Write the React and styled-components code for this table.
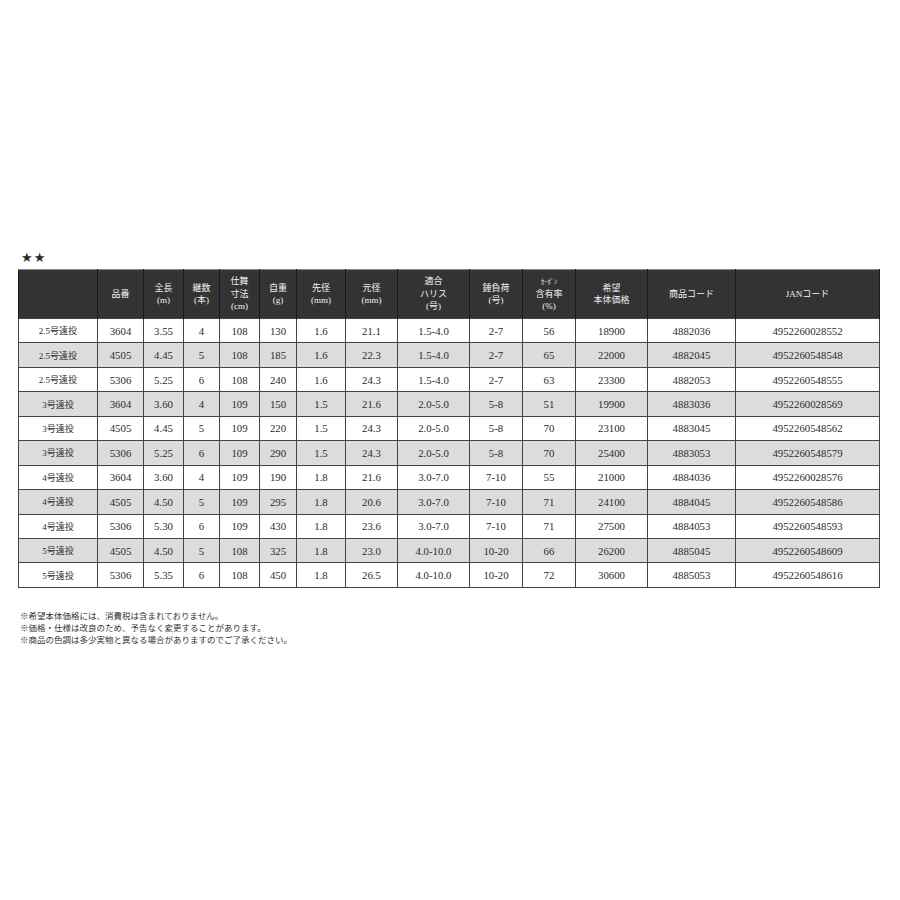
import styled, { createGlobalStyle } from "styled-components"

const GlobalStyle = createGlobalStyle`
	html, body {
		margin: 0;
		padding: 0;
		background: #fff;
	}
`

const columns = [
	{ label: [""], width: 79 },
	{ label: ["品番"], width: 46 },
	{ label: ["全長", "(m)"], width: 40 },
	{ label: ["継数", "(本)"], width: 36 },
	{ label: ["仕舞", "寸法", "(cm)"], width: 40 },
	{ label: ["自重", "(g)"], width: 37 },
	{ label: ["先径", "(mm)"], width: 49 },
	{ label: ["元径", "(mm)"], width: 52 },
	{ label: ["適合", "ハリス", "(号)"], width: 72 },
	{ label: ["錘負荷", "(号)"], width: 53 },
	{ label: ["ｶｰﾎﾞﾝ", "含有率", "(%)"], width: 53, tiny: true },
	{ label: ["希望", "本体価格"], width: 72 },
	{ label: ["商品コード"], width: 88 },
	{ label: ["JANコード"], width: 144 },
]

const rows = [
	["2.5号遠投", "3604", "3.55", "4", "108", "130", "1.6", "21.1", "1.5-4.0", "2-7", "56", "18900", "4882036", "4952260028552"],
	["2.5号遠投", "4505", "4.45", "5", "108", "185", "1.6", "22.3", "1.5-4.0", "2-7", "65", "22000", "4882045", "4952260548548"],
	["2.5号遠投", "5306", "5.25", "6", "108", "240", "1.6", "24.3", "1.5-4.0", "2-7", "63", "23300", "4882053", "4952260548555"],
	["3号遠投", "3604", "3.60", "4", "109", "150", "1.5", "21.6", "2.0-5.0", "5-8", "51", "19900", "4883036", "4952260028569"],
	["3号遠投", "4505", "4.45", "5", "109", "220", "1.5", "24.3", "2.0-5.0", "5-8", "70", "23100", "4883045", "4952260548562"],
	["3号遠投", "5306", "5.25", "6", "109", "290", "1.5", "24.3", "2.0-5.0", "5-8", "70", "25400", "4883053", "4952260548579"],
	["4号遠投", "3604", "3.60", "4", "109", "190", "1.8", "21.6", "3.0-7.0", "7-10", "55", "21000", "4884036", "4952260028576"],
	["4号遠投", "4505", "4.50", "5", "109", "295", "1.8", "20.6", "3.0-7.0", "7-10", "71", "24100", "4884045", "4952260548586"],
	["4号遠投", "5306", "5.30", "6", "109", "430", "1.8", "23.6", "3.0-7.0", "7-10", "71", "27500", "4884053", "4952260548593"],
	["5号遠投", "4505", "4.50", "5", "108", "325", "1.8", "23.0", "4.0-10.0", "10-20", "66", "26200", "4885045", "4952260548609"],
	["5号遠投", "5306", "5.35", "6", "108", "450", "1.8", "26.5", "4.0-10.0", "10-20", "72", "30600", "4885053", "4952260548616"],
]

const notes = [
	"※希望本体価格には、消費税は含まれておりません。",
	"※価格・仕様は改良のため、予告なく変更することがあります。",
	"※商品の色調は多少実物と異なる場合がありますのでご了承ください。",
]

export default function App(){
	return (
		<Page>
			<GlobalStyle />
			<Stars>★★</Stars>
			<SpecTable>
				<colgroup>
					{columns.map((c, i) => <col key={i} style={{ width: c.width }} />)}
				</colgroup>
				<thead>
					<tr>
						{columns.map((c, i) => (
							<HeadCell key={i}>
								{c.label.map((line, j) => (
									<HeadLine key={j} $tiny={c.tiny && j === 0}>{line}</HeadLine>
								))}
							</HeadCell>
						))}
					</tr>
				</thead>
				<tbody>
					{rows.map((r, i) => (
						<Row key={i} $shaded={i % 2 === 1}>
							{r.map((v, j) => <Cell key={j} $jp={j === 0}>{v}</Cell>)}
						</Row>
					))}
				</tbody>
			</SpecTable>
			<Notes>
				{notes.map((n, i) => <Note key={i}>{n}</Note>)}
			</Notes>
		</Page>
	)
}

const Page = styled.div`
	padding: 250px 0 0 18px;
	width: 862px;
	color: #333;
`

const Stars = styled.div`
	font-family: "DejaVu Sans", sans-serif;
	font-size: 13px;
	line-height: 16px;
	height: 19px;
	padding-left: 3px;
	letter-spacing: 1px;
	color: #2a2a2a;
`

const SpecTable = styled.table`
	border-collapse: collapse;
	table-layout: fixed;
	width: 861px;
	border: 1px solid #8a8a8a;
	font-family: "Liberation Serif", "Noto Sans CJK JP", serif;
`

const HeadCell = styled.th`
	background: #333;
	color: #f2f2f2;
	height: 48px;
	padding: 0;
	font-weight: 400;
	font-size: 8.5px;
	line-height: 12.5px;
	text-align: center;
	vertical-align: middle;
	border-left: 1px solid #1a1a1a;
	border-right: 1px solid #1a1a1a;
	border-top: 1px solid #8a8a8a;
`

const HeadLine = styled.div`
	font-size: ${p => p.$tiny ? "6.5px" : "9px"};
	font-family: ${p => p.$tiny ? '"Noto Sans CJK JP", sans-serif' : '"Liberation Serif", "Noto Sans CJK JP", serif'};
`

const Row = styled.tr`
	background: ${p => p.$shaded ? "#dcdcdc" : "#fff"};
	height: 24.45px;
`

const Cell = styled.td`
	padding: 0;
	text-align: center;
	vertical-align: middle;
	border: 1px solid #444;
	font-size: ${p => p.$jp ? "9px" : "10.8px"};
	font-family: "Liberation Serif", "Noto Sans CJK JP", serif;
	color: #2b2b2b;
`

const Notes = styled.div`
	margin-top: 21px;
	padding-left: 2px;
	font-family: "Noto Sans CJK JP", sans-serif;
	font-size: 8.5px;
	line-height: 12.3px;
	color: #333;
`

const Note = styled.div``
